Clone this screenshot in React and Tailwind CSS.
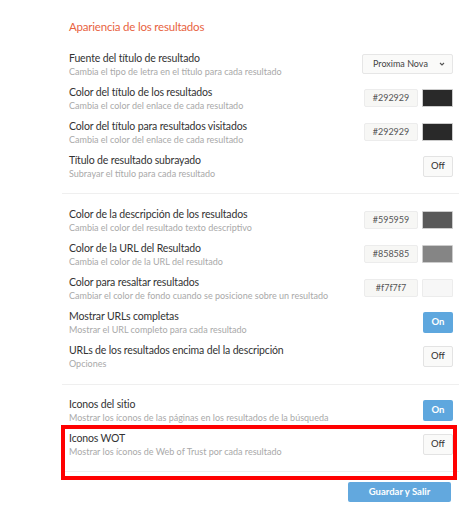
import React from "react";

const font = { fontFamily: "Lato, 'Liberation Sans', sans-serif" };

function Row({ title, sub, children }) {
  return (
    <div className="flex items-center h-[34px] pl-[7px] pr-[6px]">
      <div className="flex-1 min-w-0 pt-[1px]">
        <div className="text-[10.5px] leading-[13px] tracking-[-0.15px] text-[#333333] whitespace-nowrap">{title}</div>
        <div className="text-[9px] leading-[13px] text-[#a9a9a9] whitespace-nowrap">{sub}</div>
      </div>
      {children}
    </div>
  );
}

function ColorCtl({ value, color, bordered }) {
  return (
    <div className="flex items-center gap-[4px]">
      <div className="w-[54px] h-[18px] flex items-center justify-center bg-[#f7f7f5] border border-[#ececec] rounded-[2px] text-[9px] text-[#555555]">
        {value}
      </div>
      <div
        className={
          "w-[31px] h-[18px] rounded-[1px] " +
          (bordered ? "border border-[#ececec]" : "border border-[#cccccc]")
        }
        style={{ backgroundColor: color }}
      />
    </div>
  );
}

function Toggle({ on }) {
  return on ? (
    <div className="w-[30px] h-[21px] flex items-center justify-center bg-[#5ea7de] rounded-[2px] text-[9.5px] text-white font-bold">
      On
    </div>
  ) : (
    <div className="w-[30px] h-[21px] flex items-center justify-center bg-[#fafaf9] border border-[#e3e3e3] rounded-[2px] text-[9.5px] text-[#333333]">
      Off
    </div>
  );
}

export default function App() {
  return (
    <div className="relative w-[459px] h-[507px] bg-white overflow-hidden" style={font}>
      <div className="pl-[62px]">
        <div className="pt-[20px] pl-[7px] h-[47px]">
          <div className="text-[11.5px] leading-[14px] tracking-[-0.2px] text-[#e8633f]">Apariencia de los resultados</div>
        </div>

        <Row title="Fuente del título de resultado" sub="Cambia el tipo de letra en el título para cada resultado">
          <div className="w-[91px] h-[20px] flex items-center justify-between pl-[10px] pr-[7px] bg-[#fafaf9] border border-[#e6e6e6] rounded-[2px] text-[9px] text-[#444444]">
            <span>Proxima Nova</span>
            <svg width="6" height="4" viewBox="0 0 6 4">
              <path d="M1 1 L3 3 L5 1" fill="none" stroke="#555" strokeWidth="1.1" />
            </svg>
          </div>
        </Row>
        <Row title="Color del título de los resultados" sub="Cambia el color del enlace de cada resultado">
          <ColorCtl value="#292929" color="#292929" />
        </Row>
        <Row title="Color del título para resultados visitados" sub="Cambia el color del enlace de cada resultado">
          <ColorCtl value="#292929" color="#292929" />
        </Row>
        <Row title="Título de resultado subrayado" sub="Subrayar el título para cada resultado">
          <Toggle />
        </Row>

        <div className="mt-[10px] border-t border-[#efefef] h-0" />
        <div className="h-[9px]" />

        <Row title="Color de la descripción de los resultados" sub="Cambia el color del resultado texto descriptivo">
          <ColorCtl value="#595959" color="#595959" />
        </Row>
        <Row title="Color de la URL del Resultado" sub="Cambia el color de la URL del resultado">
          <ColorCtl value="#858585" color="#858585" />
        </Row>
        <Row title="Color para resaltar resultados" sub="Cambiar el color de fondo cuando se posicione sobre un resultado">
          <ColorCtl value="#f7f7f7" color="#f7f7f7" bordered />
        </Row>
        <Row title="Mostrar URLs completas" sub="Mostrar el URL completo para cada resultado">
          <Toggle on />
        </Row>
        <Row title="URLs de los resultados encima del la descripción" sub="Opciones">
          <Toggle />
        </Row>

        <div className="mt-[11px] border-t border-[#efefef] h-0" />
        <div className="h-[8px]" />

        <Row title="Iconos del sitio" sub="Mostrar los íconos de las páginas en los resultados de la búsqueda">
          <Toggle on />
        </Row>
        <Row title="Iconos WOT" sub="Mostrar los íconos de Web of Trust por cada resultado">
          <Toggle />
        </Row>

        <div className="mt-[10px] border-t border-[#efefef] h-0" />
        <div className="flex justify-end pr-[8px] pt-[10px]">
          <div className="w-[103px] h-[20px] flex items-center justify-center bg-[#62a8de] rounded-[2px] text-[9.5px] font-bold text-white">
            Guardar y Salir
          </div>
        </div>
      </div>

      <div className="absolute left-[61px] top-[425px] w-[396px] h-[55px] border-[4px] border-[#ff0000] pointer-events-none" />
    </div>
  );
}
